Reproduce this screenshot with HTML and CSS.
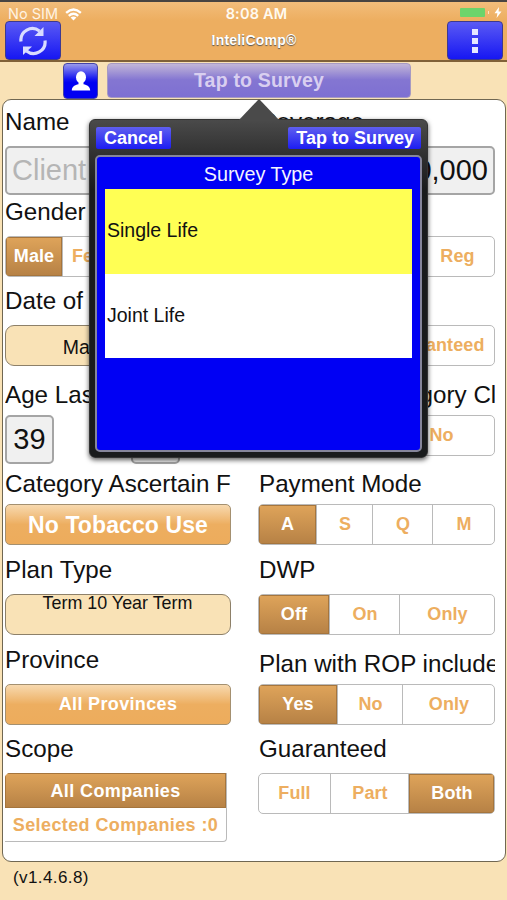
FILE: index.html
```html
<!DOCTYPE html>
<html lang="en">
<head>
<meta charset="utf-8">
<title>InteliComp</title>
<link rel="stylesheet" href="styles.css">
</head>
<body>
<div class="app">
  <header class="header">
    <button class="nav-btn" aria-label="Refresh">
      <svg width="30" height="30" viewBox="0 0 30 30" fill="none" stroke="#d9dcff" stroke-width="3.200">
        <path d="M3 15.500A11.500 11.500 0 0 1 21.500 5"/>
        <path d="M27 14.500A11.500 11.500 0 0 1 8.500 25"/>
        <path d="M25.500 1V10H16.500Z" fill="#d9dcff" stroke="none"/>
        <path d="M5 29V20.500H14Z" fill="#d9dcff" stroke="none"/>
      </svg>
    </button>
    <div class="heading">
      <div class="time">8:08 AM</div>
      <h1 class="title">InteliComp®</h1>
    </div>
    <button class="nav-btn" aria-label="Menu"><span class="dots"><i></i><i></i><i></i></span></button>
    <div class="carrier">No SIM
      <svg width="17" height="13" viewBox="0 0 18 13" fill="none" stroke="#fff" stroke-width="2.500">
        <path d="M1.200 4.800Q9-2.200 16.800 4.800"/><path d="M4 8Q9 3.600 14 8"/><path d="M9 12.800L5.900 9.800Q9 7.400 12.100 9.800Z" fill="#fff" stroke="none"/>
      </svg>
    </div>
    <div class="power">
      <span class="battery"></span>
      <svg width="8" height="11" viewBox="0 0 8 11"><path d="M5 0L.5 6.200H3.400L2.600 11L7.500 4.600H4.600Z" fill="#fff"/></svg>
    </div>
  </header>
  <div class="toolbar">
    <button class="person" aria-label="Client">
      <svg width="20" height="20" viewBox="0 0 20 20" fill="#fff"><ellipse cx="10" cy="6.300" rx="5" ry="6"/><path d="M7.500 10h5v3.200c3.500.8 6.500 2 6.700 6.300H.8c.2-4.300 3.200-5.500 6.700-6.300Z"/></svg>
    </button>
    <button class="survey">Tap to Survey</button>
  </div>
  <main class="panel">
    <section class="row">
      <div class="col"><label class="label">Name</label><div class="field placeholder">Client</div></div>
      <div class="col"><label class="label">Coverage</label><div class="field amount">100,000</div></div>
    </section>
    <section class="row">
      <div class="col"><label class="label">Gender</label>
        <div class="seg g-gender"><span class="on">Male</span><span class="start">Female</span></div></div>
      <div class="col"><label class="label">Health</label>
        <div class="seg g-health"><span class="on">Pref</span><span>Reg</span></div></div>
    </section>
    <section class="row">
      <div class="col"><label class="label">Date of Birth</label><div class="picker date">May 3, 1980</div></div>
      <div class="col"><label class="label">Type</label>
        <div class="seg g-type"><span class="on">All</span><span>Guaranteed</span></div></div>
    </section>
    <section class="row">
      <div class="col"><label class="label drop">Age Last</label>
        <div class="ages"><div class="age">39</div><div class="age">39</div></div></div>
      <div class="col"><label class="label drop category">Combine Category Class</label>
        <div class="seg g-class"><span class="on">Yes</span><span>No</span></div></div>
    </section>
    <section class="row">
      <div class="col"><label class="label drop">Category Ascertain F</label><button class="glossy big">No Tobacco Use</button></div>
      <div class="col"><label class="label drop">Payment Mode</label>
        <div class="seg g-mode"><span class="on">A</span><span>S</span><span>Q</span><span>M</span></div></div>
    </section>
    <section class="row">
      <div class="col"><label class="label">Plan Type</label><div class="picker top">Term 10 Year Term</div></div>
      <div class="col"><label class="label">DWP</label>
        <div class="seg g-dwp"><span class="on">Off</span><span>On</span><span>Only</span></div></div>
    </section>
    <section class="row">
      <div class="col"><label class="label">Province</label><button class="glossy">All Provinces</button></div>
      <div class="col"><label class="label drop">Plan with ROP included</label>
        <div class="seg g-rop"><span class="on">Yes</span><span>No</span><span>Only</span></div></div>
    </section>
    <section class="row">
      <div class="col"><label class="label">Scope</label>
        <div class="scope"><span class="on">All Companies</span><span>Selected Companies :0</span></div></div>
      <div class="col"><label class="label">Guaranteed</label>
        <div class="seg g-guar"><span>Full</span><span>Part</span><span class="on">Both</span></div></div>
    </section>
  </main>
  <footer class="version">(v1.4.6.8)</footer>

  <div class="popover">
    <svg class="arrow" width="42" height="22" viewBox="0 0 42 22"><path d="M0 22L20 1Q21 0 22 1L42 22Z" fill="#4a4a4a"/></svg>
    <div class="actions"><button class="action">Cancel</button><button class="action wide">Tap to Survey</button></div>
    <div class="sheet">
      <h2 class="sheet-title">Survey Type</h2>
      <ul class="options"><li class="selected">Single Life</li><li>Joint Life</li></ul>
    </div>
  </div>
</div>
</body>
</html>
```
FILE: styles.css
```css
* { box-sizing: border-box; }
body { margin: 0; font-family: "Liberation Sans", Arial, sans-serif; color: #111; }
button { font: inherit; padding: 0; margin: 0; }
.app { position: relative; width: 507px; height: 900px; overflow: hidden; background: #f9e2b6; display: flex; flex-direction: column; }

.header { position: relative; flex: none; height: 62px; padding: 0 5px; border-top: 2px solid #484442; border-bottom: 2px solid #806138; background: linear-gradient(#f2bd7b, #edae60 32%, #edae60); display: flex; justify-content: space-between; align-items: flex-end; }
.nav-btn { width: 56px; height: 39px; border: 1px solid #3d3990; border-radius: 4px; background: linear-gradient(#5a5af4, #1717f3); display: flex; align-items: center; justify-content: center; }
.nav-btn:nth-of-type(2) { margin-right: -1px; }
.dots { display: grid; gap: 3px; }
.dots i { width: 6px; height: 6px; background: #e7e7ff; }
.heading { align-self: stretch; text-align: center; color: #fff; }
.time { font: 600 14.500px/22px Inter, sans-serif; letter-spacing: .2px; padding-top: 1px; padding-left: 5px; color: #fffaf0; }
.title { margin: 8px 0 0; font-size: 14px; line-height: 15px; letter-spacing: .2px; text-shadow: 0 1px 1px #555; }
.carrier { position: absolute; left: 8px; top: 3px; display: flex; gap: 7px; align-items: center; font: 14.500px/18px Inter, sans-serif; color: #fff3e2; }
.power { position: absolute; right: 5px; top: 5px; display: flex; gap: 5px; align-items: center; }
.battery { position: relative; width: 25px; height: 9px; background: #6dd46b; border-radius: 1px; margin-right: 4px; }
.battery::after { content: ""; position: absolute; left: 28px; top: 3px; width: 1px; height: 3px; background: #ffe4c0; }

.toolbar { flex: none; height: 37px; padding: 1px 0 0 63px; display: flex; gap: 9px; }
.person { width: 35px; height: 36px; border: 1px solid #4343a8; border-radius: 4px; background: linear-gradient(#9a9aec, #1212f1 45%, #0000f2 55%); display: flex; align-items: center; justify-content: center; }
.survey { width: 304px; height: 35px; border: 1px solid #a69ac2; border-radius: 4px; background: linear-gradient(#c2b6d8, #8476d2 48%, #7e70d2); color: #d9cff0; font-weight: bold; font-size: 19.500px; letter-spacing: .2px; }

.panel { flex: none; width: 504px; height: 763px; margin-left: 2px; padding-left: 2px; border: 1px solid #706752; border-radius: 9px; background: #fff; }
.row { display: grid; grid-template-columns: 226px 237px; column-gap: 27px; height: 89.600px; }
.col { min-width: 0; }
.label { display: block; height: 46px; line-height: 44px; font-size: 24.200px; white-space: nowrap; overflow: hidden; }
.col + .col .label { padding-left: 1px; }
.label.drop { line-height: 52px; }
.col + .col .category { padding-left: 7px; }
.field { height: 49px; border: 2px solid #a5a5a5; border-radius: 5px; background: #f0f0f0; padding: 0 5px; font-size: 29px; line-height: 45px; }
.placeholder { color: #b5b5b5; }
.amount { text-align: right; }
.ages { display: flex; gap: 77px; }
.age { width: 49px; height: 49px; border: 2px solid #a5a5a5; border-radius: 5px; background: #f0f0f0; font-size: 29px; line-height: 45px; text-align: center; }
.picker { height: 41px; border: 1px solid #8d8069; border-radius: 9px; background: #f9e2b6; font-size: 19.500px; line-height: 42px; text-align: center; }
.picker.date { padding-right: 3px; }
.picker.top { font-size: 17.900px; line-height: 17px; padding-right: 1px; }
.glossy { display: block; width: 226px; height: 41px; border: 1px solid #a49070; border-radius: 5px; background: linear-gradient(#f7d9af, #edae60 50%, #edac5c); color: #fff; font-weight: bold; font-size: 18px; letter-spacing: .35px; }
.glossy.big { font-size: 23px; letter-spacing: .1px; padding-top: 2px; }

.seg { display: grid; height: 41px; border: 1px solid #bababa; border-radius: 5px; overflow: hidden; }
.seg span, .scope span { display: flex; align-items: center; justify-content: center; color: #edae60; font-weight: bold; font-size: 18px; letter-spacing: .1px; }
.seg span + span { border-left: 1px solid #bababa; padding-left: 1px; }
.seg .on, .scope .on { color: #fff; background: linear-gradient(#dfa45a, #b68145); box-shadow: inset 0 0 0 1px #a5753d; }
.seg .start { justify-content: flex-start; padding-left: 9px; }
.g-gender { grid-template-columns: 56px 1fr; }
.g-health { grid-template-columns: 160px 1fr; }
.g-type { grid-template-columns: 113px 1fr; }
.g-class { grid-template-columns: 128px 1fr; }
.g-mode { grid-template-columns: 57px 56px 60px 1fr; }
.g-dwp { grid-template-columns: 70px 70px 1fr; }
.g-rop { grid-template-columns: 78px 65px 1fr; }
.g-guar { grid-template-columns: 71px 78px 1fr; }
.scope { width: 222px; height: 69px; display: grid; grid-template-rows: 35px 34px; border: solid #bababa; border-width: 0 1px 1px 0; border-radius: 5px 0 4px 0; overflow: hidden; }
.scope span { letter-spacing: .4px; padding-top: 1px; }

.version { padding: 6px 13px; font-size: 17px; line-height: 20px; letter-spacing: .4px; }

.popover { position: absolute; left: 89px; top: 119px; width: 339px; height: 339px; padding: 7px 6px 6px; border: 1px solid #333; border-radius: 6px; background: linear-gradient(#4a4a4a, #303030 35px, #191b1c 70px, #191b1c); box-shadow: 0 2px 5px rgba(0,0,0,.65); }
.arrow { position: absolute; left: 148px; top: -21px; }
.actions { display: flex; justify-content: space-between; height: 22px; }
.action { height: 22px; padding: 0 8px; border: 0; border-radius: 2px; background: linear-gradient(#5f5ff0, #1d1df2); color: #fff; font-weight: bold; font-size: 18px; line-height: 22px; }
.action.wide { padding-right: 7px; }
.sheet { height: 297px; margin-top: 6px; margin-left: -1px; margin-right: -1px; padding: 4px 8px; border: 2px solid #85859a; border-radius: 5px; background: #0000f4; }
.sheet-title { margin: 0; height: 28px; color: #f4f4ff; font-weight: normal; font-size: 19.800px; line-height: 27px; text-align: center; }
.options { list-style: none; margin: 0; padding: 0; }
.options li { height: 85px; padding-left: 2px; background: #fff; font-size: 19.500px; line-height: 83px; }
.options li + li { height: 84px; }
.options .selected { background: #ffff54; }
```
